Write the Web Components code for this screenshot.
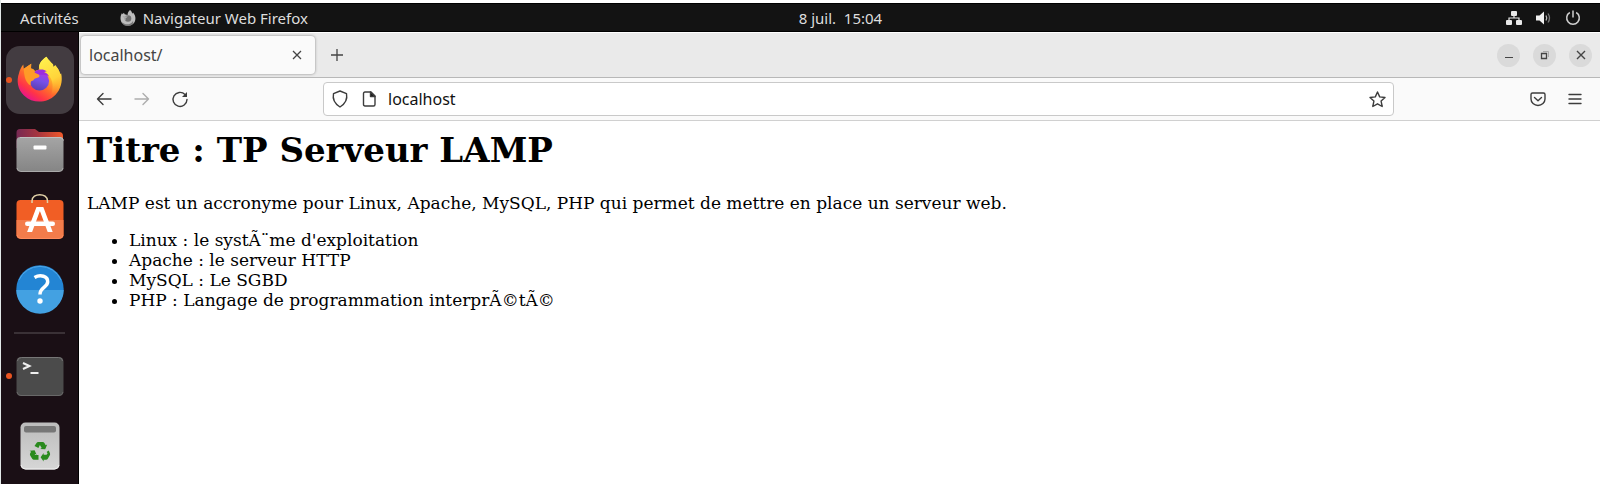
<!DOCTYPE html>
<html lang="fr">
<head>
<meta charset="utf-8">
<title>localhost/</title>
<style>
html, body { margin: 0; min-height: 100%; background: #fff; }
body { font-family: "Noto Sans", "Open Sans", sans-serif; font-size: 15px; }
</style>
</head>
<body>
<ubuntu-desktop>
  <top-bar slot="top"></top-bar>
  <app-dock slot="dock">
    <dock-item active running label="Firefox" icon="firefox"></dock-item>
    <dock-item label="Fichiers" icon="files"></dock-item>
    <dock-item label="Logiciels" icon="software"></dock-item>
    <dock-item label="Aide" icon="help"></dock-item>
    <dock-separator></dock-separator>
    <dock-item running label="Terminal" icon="terminal"></dock-item>
    <dock-item label="Corbeille" icon="trash"></dock-item>
  </app-dock>
  <browser-window>
    <tab-strip slot="tabs">localhost/</tab-strip>
    <nav-bar slot="nav" url="localhost"></nav-bar>
    <web-document>
      <span slot="title">Titre : TP Serveur LAMP</span>
      <span slot="intro">LAMP est un accronyme pour Linux, Apache, MySQL, PHP qui permet de mettre en place un serveur web.</span>
    </web-document>
  </browser-window>
</ubuntu-desktop>

<script>
const BASE = `
:host, *, *::before, *::after { box-sizing: border-box; }
button { border: 0; padding: 0; margin: 0; background: none; color: inherit; font: inherit; display: flex; align-items: center; justify-content: center; flex: none; }
svg { display: block; flex: none; overflow: visible; }
`;
function define(name, css, html, ready) {
  customElements.define(name, class extends HTMLElement {
    constructor() {
      super();
      this.attachShadow({ mode: "open" }).innerHTML = `<style>${BASE}${css}</style>${html}`;
    }
    connectedCallback() { if (ready) ready.call(this, this.shadowRoot); }
  });
}

const ICONS = {
  firefox: `<svg width="48" height="48" viewBox="0 0 48 48">
    <defs>
      <linearGradient id="a" x1=".85" y1=".1" x2=".25" y2=".95"><stop offset="0" stop-color="#ffe94a"/><stop offset=".35" stop-color="#ffb62c"/><stop offset=".6" stop-color="#ff6a2c"/><stop offset=".82" stop-color="#ff3447"/><stop offset="1" stop-color="#e9158a"/></linearGradient>
      <linearGradient id="b" x1=".7" y1="0" x2=".4" y2="1"><stop offset="0" stop-color="#b833e1"/><stop offset=".5" stop-color="#7550e8"/><stop offset="1" stop-color="#5a3fae"/></linearGradient>
      <linearGradient id="c" x1=".4" y1="0" x2=".7" y2="1"><stop offset="0" stop-color="#fff04d"/><stop offset=".6" stop-color="#ffd43a"/><stop offset="1" stop-color="#ff9a2c" stop-opacity="0"/></linearGradient>
    </defs>
    <path fill="url(#a)" d="M30.500.7c1.700 3 4.200 5.300 6.600 7.700l.2 2.600 2-1.700c2.600 3 4.300 5.700 4.800 8.700l1-.8c1.900 8-.4 16.300-5.800 21.800-8.600 8.600-22.600 8.900-31.300.4C1.500 33.200.3 24.500 3 17.200 3.800 14 5 11.500 7.300 8.600l.5 4.200 7.400-5-.2 4.700c2 .3 3.200 1.200 4 2.500l4-1.500C22.500 8.500 25.300 4.200 30.500.7z"/>
    <path fill="url(#c)" d="M30.500.7c1.700 3 4.200 5.300 6.600 7.700l.2 2.600 2-1.700c4 4.700 5.800 9.800 5.800 15.300-.1 7-4.200 12-9.900 14.500 2.200-7 2.500-15-3.300-20.600-4.200-3.600-9-4.500-8.800-7.500C23.200 6.700 26.200 3.600 30.500.7z"/>
    <circle cx="23.500" cy="25" r="9.600" fill="url(#b)"/>
    <path fill="#9c2ddd" d="M16 18.500c3-4.600 10-6.900 15.200-2.800-1.400-.2-2.400 0-3 .5 2.800 1 4 2.300 4.600 4.100-4-2.500-9-1-16.800-1.800z"/>
    <path fill="#ff9b27" d="M7.800 12.800l7.400-5-.2 4.700c2.200.400 3.300 2 3.800 4.200l4.300 2c.8 1.500.2 2.400-.8 2.700-2.600.7-4.200 1.200-5 3-3.100 0-2.800 3-2.500 5.200C9.500 27 8 20 7.800 12.800z"/>
  </svg>`,
  files: `<svg width="48" height="48" viewBox="0 0 48 48">
    <defs><linearGradient id="a"><stop offset="0" stop-color="#772953"/><stop offset=".45" stop-color="#a5343f"/><stop offset="1" stop-color="#f1592a"/></linearGradient>
    <linearGradient id="b" x2="0" y2="1"><stop offset="0" stop-color="#a5a5a5"/><stop offset="1" stop-color="#858585"/></linearGradient></defs>
    <path fill="url(#a)" d="M.5 6.500Q.500 3 4 3h15l4 3h20q4 0 4 4v12H.5z"/>
    <rect x=".5" y="11" width="47" height="34.500" rx="4" fill="url(#b)"/>
    <path d="M4 11.500h40q3 0 3.500 3" fill="none" stroke="#c0c0c0"/><path d="M1 42q.500 3.500 4 3.500h38q3.500 0 4-3.500" fill="none" stroke="#aaa"/>
    <rect x="17.500" y="19.500" width="13" height="4" rx="1" fill="#fff"/>
  </svg>`,
  software: `<svg width="48" height="48" viewBox="0 4 48 48">
    <rect x=".5" y="8" width="47" height="38.500" rx="4" fill="#f15e25"/>
    <path fill="#f37c4b" d="M.5 28h47v14.500q0 4-4 4h-39q-4 0-4-4z"/>
    <path d="M1 43q.500 3.500 4 3.500h38q3.500 0 4-3.500" fill="none" stroke="#ff8b5c"/>
    <path d="M16 11V9c0-8.500 15.500-8.500 15.500 0v2" fill="none" stroke="#e3d3a9" stroke-width="1.500"/>
    <path fill="#fff" d="M20.500 15h6.800l9.400 25h-5l-7.800-21-7.800 21h-5z"/>
    <rect x="9" y="29.500" width="30" height="4.500" rx="2.200" fill="#fff"/>
  </svg>`,
  help: `<svg width="48" height="48" viewBox="0 1 48 48">
    <circle cx="24" cy="24" r="23.700" fill="#2385d4"/>
    <path fill="#43a1e2" d="M.3 25h47.400a23.700 23.700 0 0 1-47.400 0z"/>
    <path d="M3 15a23 23 0 0 1 42 0" fill="none" stroke="#51a9e9"/>
    <path d="M18.500 12.500c6-3.500 13.500-1.300 13.200 4.300-.300 5.700-8.200 5.700-7.700 12.700" fill="none" stroke="#fff" stroke-width="3.500"/>
    <circle cx="24" cy="36" r="2.700" fill="#fff"/>
  </svg>`,
  terminal: `<svg width="48" height="48" viewBox="0 0 48 48">
    <rect x=".5" y="5" width="47" height="39" rx="4.500" fill="#4b4b4b"/>
    <path d="M1.500 9q0-3.500 4-3.500h37q4 0 4 3.500" fill="none" stroke="#777"/><path d="M1 40q.500 3.500 4 3.500h38q3.500 0 4-3.500" fill="none" stroke="#686868"/>
    <path d="M7 11l6.500 3L7 17M14.500 21H22.500" fill="none" stroke="#eee" stroke-width="2"/>
  </svg>`,
  trash: `<svg width="48" height="48" viewBox="0 0 48 48">
    <defs><linearGradient id="a" x2="0" y2="1"><stop offset="0" stop-color="#bcbcbc"/><stop offset="1" stop-color="#d6d6d6"/></linearGradient></defs>
    <rect x="4.500" y=".500" width="39" height="47" rx="5" fill="url(#a)"/>
    <path d="M5 43q.500 4 4.500 4h29q4 0 4.500-4" fill="none" stroke="#f2f2f2"/>
    <rect x="8" y="4" width="32" height="6.500" rx="2" fill="#777"/>
    <g fill="#2a8a1e"><path d="M18.500 24l2-3q.600-.900 1.700-.900h4.500q1.100 0 1.700 1l1.300 2.200 1.500-.8-2 4.800-5-.400 1.500-.9-1.800-3-1.500 3z"/>
    <path d="M32.700 28.500l1.200 2.500q.5 1.200-.1 2.200l-2 3.500q-.6 1-1.700 1h-2.500v1.700l-3-4.200 3-4.200v1.800h3l1-1.600-1-1.300z"/>
    <path d="M22.500 37.700h-4.600q-1.100 0-1.700-1l-2-3.300q-.6-1 0-2.100l.9-1.600-1.500-.9 5-.5 2.100 4.700-1.500-.9-.5 1h3.800z"/></g>
  </svg>`
};

define("ubuntu-desktop", `
:host { display: flex; flex-direction: column; min-height: 100vh; padding: 3px 0 0 1px; background: #e2e9e8; }
.work { display: flex; flex: 1; }
::slotted(browser-window) { flex: 1; min-width: 0; }
`, `<slot name="top"></slot><div class="work"><slot name="dock"></slot><slot></slot></div>`);

define("top-bar", `
:host { display: grid; grid-template-columns: 39fr auto 35fr; align-items: center; height: 29px; background: #131313; color: #dedede; border: solid #000; border-width: 1px 0; padding: 0 19px; box-shadow: 0 -3px #fff; font-size: 15px; line-height: 20px; }
.left, .app, .status { display: flex; align-items: center; }
.left { gap: 41px; } .app { gap: 7px; } .status { gap: 13px; justify-content: flex-end; }
time { white-space: pre; }
`, `
<div class="left"><button>Activités</button>
<button class="app"><svg width="16" height="16" viewBox="0 0 16 16"><path fill="#bdbdbd" d="M10 0c2 1.500 2 3 2.300 3.700L13 2.500c3.500 3.500 3 9 0 11.500a8 8 0 0 1-11-1C0 10.500 0 6 2 3l.4 1.200L4 2.800l.6 1.500 3 .7C7.500 3 8.500 1 10 0z"/><path fill="#777" d="M2 12c3 3.500 9 3 11-1 1 2-1 5-5 5-3 0-5-1-6-4z"/><circle cx="8" cy="8.500" r="3.300" fill="#6f6f6f"/><path fill="#aaa" d="M2.500 6l5.500.5-2.500 2L6 11z"/></svg><span>Navigateur Web Firefox</span></button></div>
<time>8 juil.  15:04</time>
<div class="status">
<button aria-label="Réseau"><svg width="16" height="16" viewBox="0 0 16 16" fill="#e8e8e8"><rect x="5" y="1" width="6" height="5" rx="1"/><rect x="0" y="10" width="6" height="5" rx="1"/><rect x="10" y="10" width="6" height="5" rx="1"/><path d="M8 5v3M3 11V8h10v3" fill="none" stroke="#e8e8e8" stroke-width="1.200"/></svg></button>
<button aria-label="Volume"><svg width="17" height="16" viewBox="0 0 17 16"><path fill="#f0f0f0" d="M1 5.500h3.500L9 1.500v13l-4.500-4H1z"/><path d="M11 5.500q1.500 2.500 0 5" fill="none" stroke="#bbb" stroke-width="1.300"/><path d="M13 3.500q3 4.500 0 9" fill="none" stroke="#777" stroke-width="1.300"/></svg></button>
<button aria-label="Éteindre"><svg width="16" height="16" viewBox="0 0 16 16" fill="none" stroke="#cfcfcf" stroke-width="1.500"><path d="M4.800 2.500a6.300 6.300 0 1 0 6.400 0M8 .5v7"/></svg></button>
</div>`);

define("app-dock", `
:host { display: block; width: 78px; flex: none; padding-top: 13px; background: #1a0f15; border-right: 1px solid #000; }
`, `<slot></slot>`);

define("dock-item", `
:host { display: grid; place-items: center; grid-template-columns: 1fr; height: 70px; padding: 1px 0; position: relative; }
button { width: 68px; height: 68px; border-radius: 14px; }
:host([active]) button { background: #433c41; }
:host([running])::before { content: ""; position: absolute; left: 5px; top: 32px; width: 6px; height: 6px; border-radius: 50%; background: #e95420; z-index: 1; }
`, `<button></button>`, function (root) {
  const b = root.querySelector("button");
  b.setAttribute("aria-label", this.getAttribute("label"));
  b.innerHTML = ICONS[this.getAttribute("icon")];
});

define("dock-separator", `
:host { display: flex; height: 16px; align-items: center; justify-content: center; }
i { width: 51px; height: 2px; background: #3a3136; }
`, `<i></i>`);

define("browser-window", `
:host { display: flex; flex-direction: column; background: #fff; }
`, `<slot name="tabs"></slot><slot name="nav"></slot><slot></slot>`);

define("tab-strip", `
:host { display: flex; align-items: center; height: 46px; background: #eaeaea; border-top: 1px solid #fff; border-bottom: 1px solid #b8b8b8; padding: 0 8px 0 2px; color: #444; font-size: 16px; }
.tab { display: flex; align-items: center; justify-content: space-between; width: 234px; height: 38px; padding: 0 10px 0 8px; border-radius: 4px; background: #fafafa; box-shadow: 0 0 3px #888; }
.new { margin-left: 14px; }
.controls { margin-left: auto; display: flex; gap: 13px; }
.controls button { width: 23px; height: 23px; border-radius: 50%; background: #dadada; }
svg { fill: none; stroke: #444; }
`, `
<div class="tab"><slot></slot><button aria-label="Fermer l’onglet"><svg width="16" height="16" viewBox="0 0 16 16" stroke-width="1.300"><path d="M4 4l8 8M12 4l-8 8"/></svg></button></div>
<button class="new" aria-label="Nouvel onglet"><svg width="16" height="16" viewBox="0 0 16 16" stroke-width="1.300"><path d="M8 2v12M2 8h12"/></svg></button>
<div class="controls">
<button aria-label="Réduire"><svg width="16" height="16" viewBox="0 0 16 16"><path d="M4 10.500h8"/></svg></button>
<button aria-label="Restaurer"><svg width="16" height="16" viewBox="0 0 16 16"><path d="M6 4.500h5.500V10" stroke="#aaa"/><path d="M4.500 6.500h5v5h-5z" stroke-width="1.300"/></svg></button>
<button aria-label="Fermer"><svg width="16" height="16" viewBox="0 0 16 16" stroke-width="1.400"><path d="M4 4l8 8M12 4l-8 8"/></svg></button>
</div>`);

define("nav-bar", `
:host { display: grid; grid-template-columns: 244px minmax(0, 1fr) 206px; align-items: center; height: 43px; background: #fafafa; border-bottom: 1px solid #d0d0d0; }
.nav { display: flex; gap: 22px; padding-left: 17px; }
.field { display: flex; align-items: center; gap: 14px; height: 34px; padding: 0 7px 0 8px; background: #fff; border: 1px solid #c9c9c9; border-radius: 4px; }
input { flex: 1; min-width: 0; border: 0; padding: 0; margin-left: -2px; outline: 0; background: none; color: #111; font: inherit; font-size: 16px; line-height: 20px; }
.tools { display: flex; gap: 22px; justify-content: flex-end; padding-right: 18px; }
svg { fill: none; stroke: #3c3c3c; stroke-width: 1.400; stroke-linejoin: round; stroke-linecap: round; }
.off { opacity: .4; }
`, `
<nav class="nav">
<button aria-label="Précédent"><svg width="16" height="16" viewBox="0 0 16 16"><path d="M15 8H1.500M7 2.500L1.500 8 7 13.500"/></svg></button>
<button class="off" aria-label="Suivant" disabled><svg width="16" height="16" viewBox="0 0 16 16"><path d="M1 8h13.500M9 2.500L14.500 8 9 13.500"/></svg></button>
<button aria-label="Actualiser"><svg width="16" height="16" viewBox="0 0 16 16"><path d="M13 3.500A7 7 0 1 0 15 8.500"/><path d="M15 1v5h-5z" fill="#3c3c3c" stroke="none"/></svg></button>
</nav>
<div class="field">
<svg width="16" height="18" viewBox="0 0 16 18"><path d="M8 1l6.500 2.700q1.700 8.300-6.500 13.300Q-.200 12 1.500 3.700z"/></svg>
<svg width="14" height="16" viewBox="0 0 14 16"><path d="M3 1h6l4 4v8.500q0 1.500-1.500 1.500H3q-1.500 0-1.500-1.500v-11Q1.500 1 3 1z"/><path d="M8.500 1L13 5.500H8.500z" fill="#111"/></svg>
<input type="text" aria-label="Adresse">
<button aria-label="Marquer cette page"><svg width="17" height="17" viewBox="0 0 17 17"><path d="M8.500 1l2.200 4.900 5.300.6-3.900 3.600 1.100 5.400-4.700-2.700-4.700 2.700 1.100-5.400L1 6.500l5.300-.6z"/></svg></button>
</div>
<div class="tools">
<button aria-label="Pocket"><svg width="16" height="16" viewBox="0 0 16 16"><path d="M2.500 2h11q1.500 0 1.500 1.500V8A7 6.500 0 0 1 1 8V3.500Q1 2 2.500 2zM4.500 6.500L8 9.700l3.500-3.200"/></svg></button>
<button aria-label="Menu"><svg width="14" height="16" viewBox="0 0 14 16"><path d="M1 3.500h12M1 8h12M1 12.500h12"/></svg></button>
</div>`, function (root) { root.querySelector("input").value = this.getAttribute("url"); });

define("web-document", `
:host { display: block; padding: 9px 8px; color: #000; font-family: "DejaVu Serif", serif; font-size: 17px; line-height: 20px; }
h1 { margin: 0 0 23px; font-size: 34px; line-height: 40px; }
p { margin: 0 0 17px; }
ul { margin: 0; padding-left: 42px; }
`, `<h1><slot name="title"></slot></h1><p><slot name="intro"></slot></p>
<ul><li>Linux : le systÃ¨me d'exploitation</li><li>Apache : le serveur HTTP</li><li>MySQL : Le SGBD</li><li>PHP : Langage de programmation interprÃ©tÃ©</li></ul>`);
</script>
</body>
</html>
